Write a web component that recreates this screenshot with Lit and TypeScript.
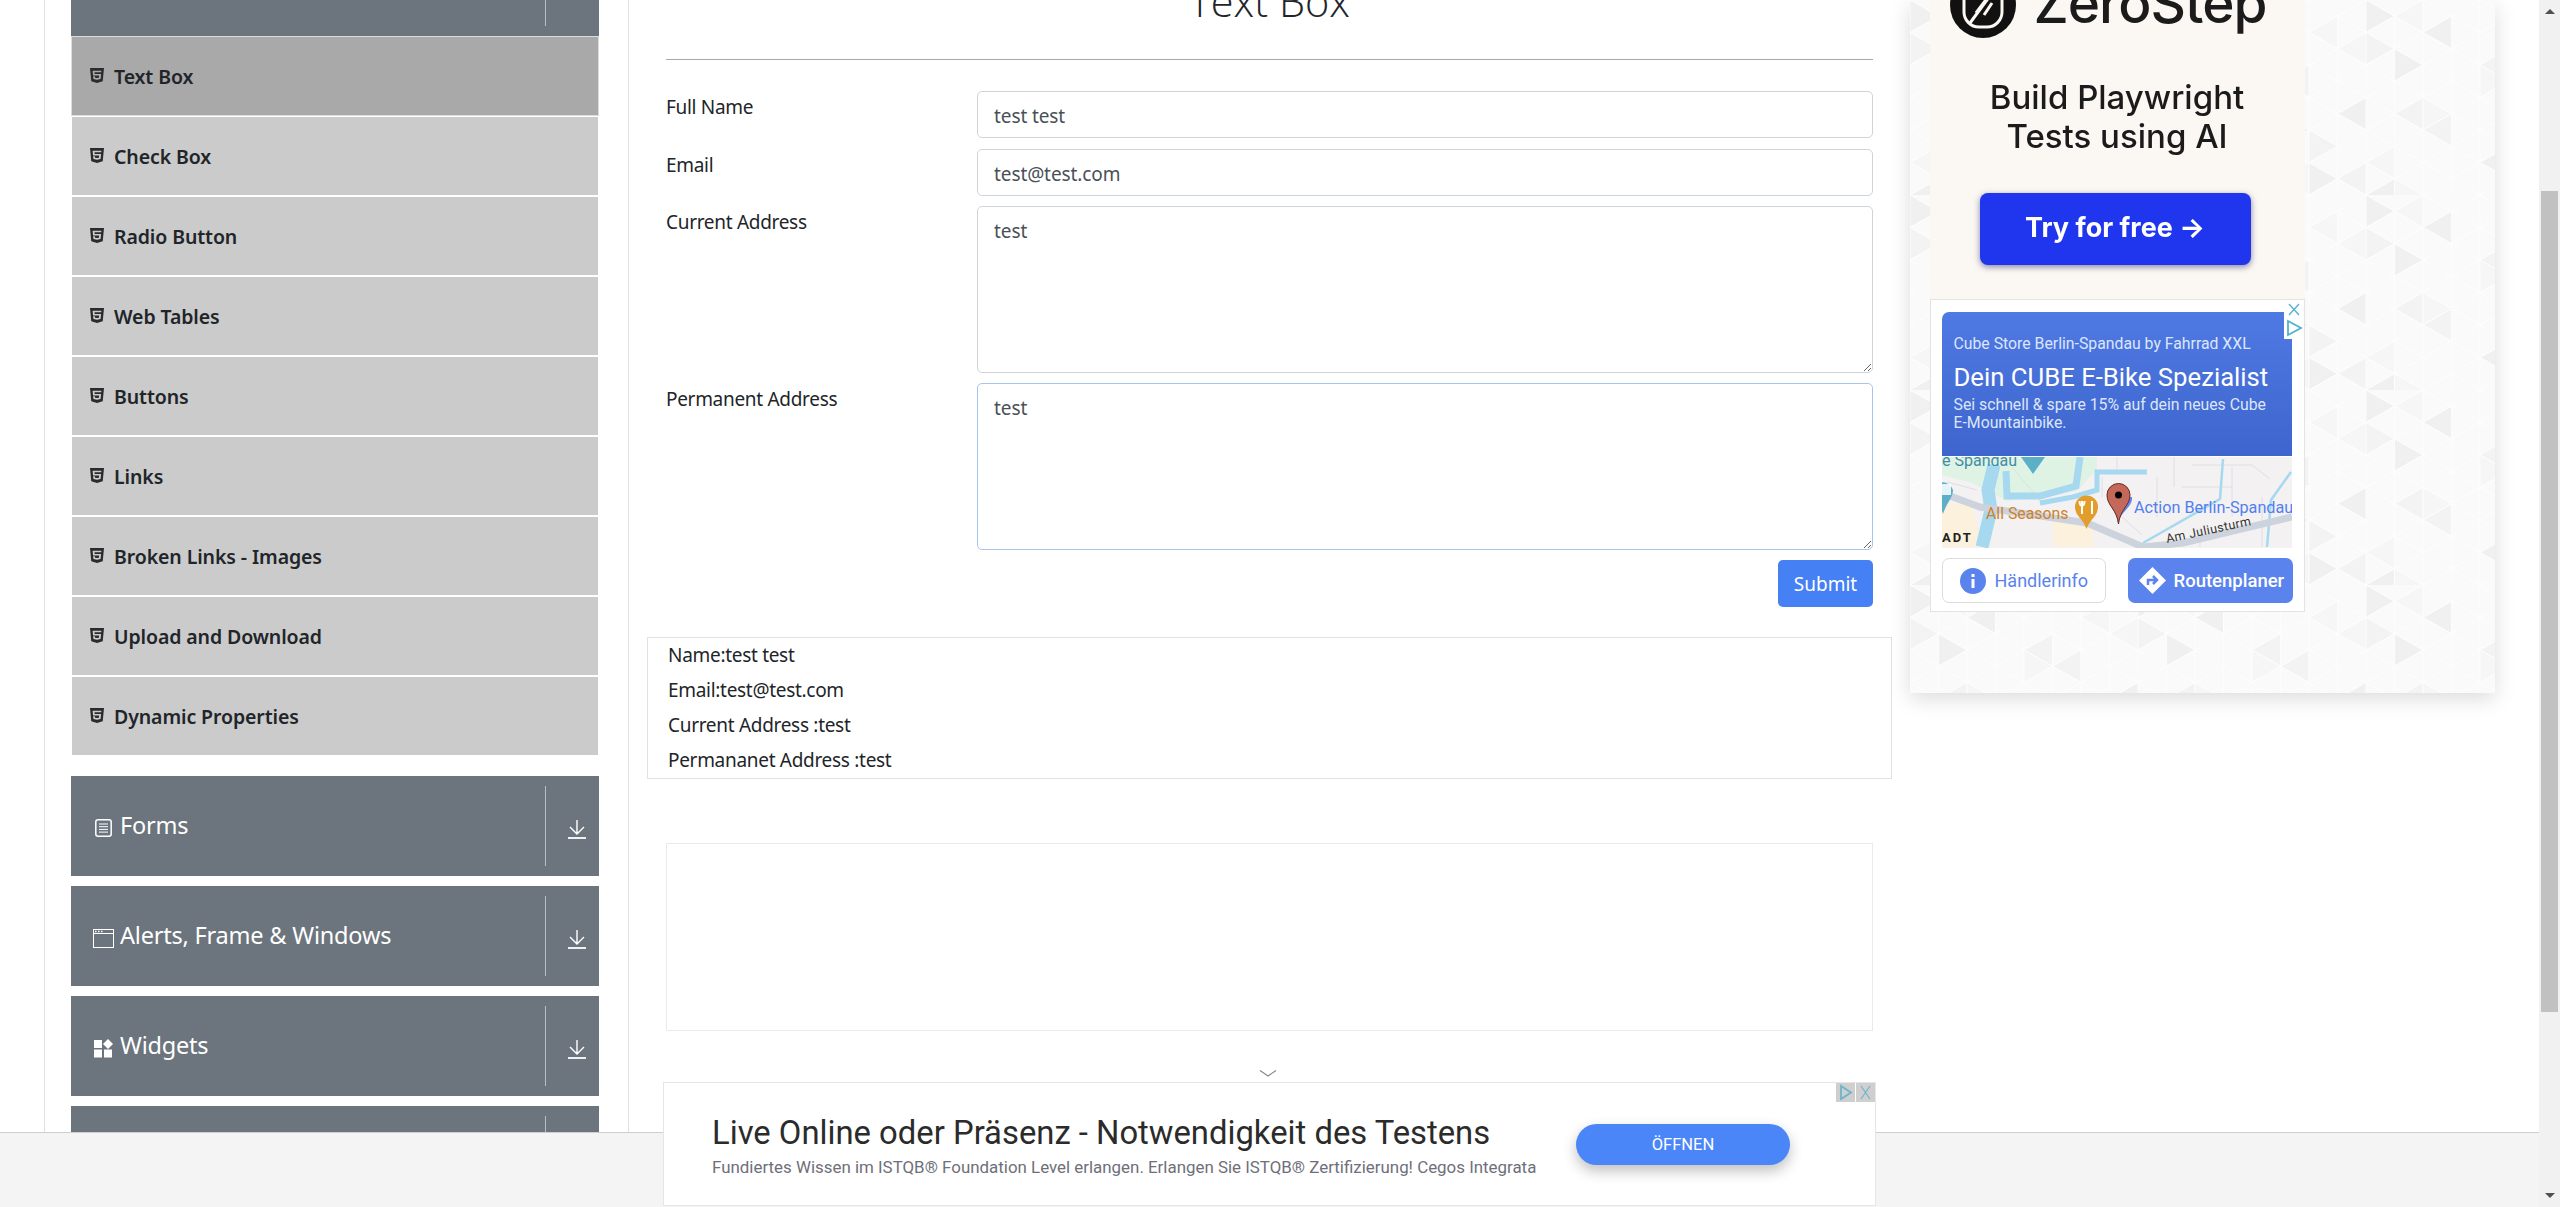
import { LitElement, css, html, svg, unsafeCSS } from "lit";
import { customElement } from "lit/decorators.js";

const FONT = unsafeCSS(`"Noto Sans", "Open Sans", sans-serif`);

// triangle grid behind the right hand card
function patternTile() {
  const w = 28.5;
  const h = 32.5;
  const cols = 8;
  const rows = 6;
  let polys = "";
  for (let c = 0; c < cols; c++) {
    for (let r = 0; r < rows * 2; r++) {
      const x = c * w;
      const y = (r * h) / 2;
      const even = (c + r) % 2 === 0;
      const pts = even
        ? `${x},${y} ${x},${y + h} ${x + w},${y + h / 2}`
        : `${x + w},${y} ${x + w},${y + h} ${x},${y + h / 2}`;
      const n = (c * 7 + r * 13 + c * r * 3) % 11;
      const fill = n === 0 ? "#f0f0f0" : n === 4 ? "#f3f3f3" : n === 7 ? "#f6f6f6" : "#fafafa";
      polys += `<polygon points='${pts}' fill='${fill}' stroke='#fdfdfd' stroke-width='1'/>`;
    }
  }
  const tile = `<svg xmlns='http://www.w3.org/2000/svg' width='${cols * w}' height='${rows * h}'>${polys}</svg>`;
  return `url("data:image/svg+xml,${encodeURIComponent(tile)}")`;
}

const html5Icon = svg`<svg class="shield" viewBox="0 0 384 512" preserveAspectRatio="none"><path d="M0 32l34.9 395.8L191.5 480l157.6-52.2L384 32H0zm308.2 127.9H124.4l4.1 49.4h175.6l-13.6 148.4-97.9 27v.3h-1.1l-98.7-27.3-6-75.8h47.7L138 320l53.5 14.5 53.7-14.5 6-62.2H84.3L71.5 112.2h241.1l-4.4 47.7z"/></svg>`;

const downIcon = svg`<svg class="down" viewBox="0 0 18 19" fill="none" stroke="#fff" stroke-width="1.4"><path d="M9 0v14M2 7l7 7 7-7"/><path stroke-width="1.8" d="M0 18h18"/></svg>`;

const formsIcon = svg`<svg class="cat" width="17" height="18" viewBox="0 0 17 18" fill="none" stroke="#fff"><rect x=".8" y=".8" width="15.4" height="16.4" rx="2.2" stroke-width="1.5"/><path d="M4 5h9M4 7.7h9M4 10.4h9M4 13.1h9" stroke-width="1"/></svg>`;

const windowIcon = svg`<svg class="cat" width="21" height="19" viewBox="0 0 21 19" fill="none" stroke="#fff"><rect x=".5" y=".5" width="20" height="18" stroke-width="1"/><path d="M.5 4.5h20" stroke-width="1"/><path d="M2 2.5h1.5M5 2.5h1.5M8 2.5h1.5" stroke-width="1.4"/></svg>`;

const widgetsIcon = svg`<svg class="cat" width="19" height="19" viewBox="0 0 19 19" fill="#fff"><rect y="1" width="8" height="8"/><rect y="10.5" width="8" height="8"/><rect x="10" y="10.5" width="8" height="8"/><path d="M14 0l5 5-5 5-5-5z"/></svg>`;

const mapArt = svg`<svg class="map" width="350" height="91" viewBox="0 0 350 91" font-family="Roboto, sans-serif">
  <rect width="350" height="91" fill="#f3f1f2"/>
  <path d="M0 0h155v12l-20 22-70 10-35-18L0 18z" fill="#dff3e5"/>
  <path d="M0 47h30l10 43H0zM111 63h40v27h-40z" fill="#fbf1dc"/>
  <g fill="none" stroke="#dedfe6" stroke-width="1">
    <path d="M175 0v12M215 20v40M232 0v30M250 8h60l18 14M240 30h50M290 10v50M320 40v50M180 60l20 18M258 70v20M160 20v20M70 10l30 36M5 25l30 8"/>
  </g>
  <g fill="none" stroke="#a6d8ef">
    <path d="M52 8l-6 25 3 20-9 37" stroke-width="13"/>
    <path d="M64 14l1 25h33l36-10 4-29" stroke-width="7"/>
    <path d="M98 46l33-6 24-7V15h50" stroke-width="5"/>
    <path d="M281 2l-3 40-77 44" stroke-width="2.5"/>
    <path d="M349 15l-20 28-4 47" stroke-width="2.5"/>
  </g>
  <path d="M0 36l38 14 107 16 56 24 40-4 109-26" fill="none" stroke="#ccd3dc" stroke-width="7"/>
  <path d="M79 0h24l-12 17z" fill="#5bb0c8"/>
  <path d="M-10 33a11 11 0 0 1 21 0c0 8-6 12-10 24-3-12-11-16-11-24z" fill="#5bb0c8"/>
  <rect x="-1" y="27" width="10" height="11" fill="#fff" opacity=".85"/>
  <path d="M133 50a11.500 11.500 0 0 1 23 0c0 9-8 12-11.500 22-3-10-11.500-13-11.500-22z" fill="#e29d2b"/>
  <path d="M140 44v13M150 44v13M137.500 44c0 6 5 6 5 0" stroke="#fff" stroke-width="2" fill="none"/>
  <path d="M166 42c2 8 8 12 10 24 3-12 15-16 14-26z" fill="#5f88ee"/>
  <path d="M165 38a11.500 11.500 0 0 1 23 0c0 11-10 14-11.500 29-1.500-15-11.500-18-11.500-29z" fill="#c4695a" stroke="#6d2a22" stroke-width="1"/>
  <circle cx="176.500" cy="38" r="3.500" fill="#000"/>
  <text x="0" y="9" font-size="16" fill="#3f8ea5">e Spandau</text>
  <text x="44" y="62" font-size="15.800" fill="#d0812a">All Seasons</text>
  <text x="192" y="56" font-size="16.200" fill="#5080ef">Action Berlin-Spandau</text>
  <text x="0" y="85" font-size="13" font-weight="700" letter-spacing="2" fill="#222">ADT</text>
  <text transform="translate(225 86) rotate(-12)" font-size="12.500" letter-spacing=".4" fill="#333">Am Juliusturm</text>
</svg>`;

@customElement("app-root")
export class AppRoot extends LitElement {
  static styles = css`
    :host {
      display: block;
      width: 2560px;
      height: 1207px;
      overflow: hidden;
      font-family: ${FONT};
      font-size: 19px;
      letter-spacing: -0.3px;
      color: #212529;
      background: #fff;
    }
    * {
      box-sizing: border-box;
    }
    .page {
      display: flex;
      height: 1207px;
    }
    .viewport {
      position: relative;
      flex: 1;
      overflow: hidden;
      display: flex;
      padding-left: 44px;
    }

    /* sidebar */
    .side {
      width: 585px;
      height: 1207px;
      flex: none;
      border-left: 1px solid #dee2e6;
      border-right: 1px solid #dee2e6;
      padding: 0 29px 0 26px;
    }
    .group {
      display: flex;
      align-items: center;
      height: 100px;
      margin-bottom: 10px;
      padding-left: 21px;
      background: #6c757d;
      color: #fff;
      font-size: 23.500px;
      letter-spacing: -0.2px;
    }
    .group.scrolled {
      margin-top: -64px;
      margin-bottom: 0;
    }
    .group.tail {
      margin-bottom: 0;
    }
    .slot {
      width: 22px;
      margin-right: 6px;
      display: flex;
      justify-content: center;
      padding-top: 4px;
    }
    .group .name {
      flex: 1;
      line-height: 1;
    }
    .toggle {
      align-self: stretch;
      width: 54px;
      margin: 10px 0;
      border-left: 1px solid #b9bec3;
      display: flex;
      padding: 34px 0 0 22px;
    }
    .down {
      width: 18px;
      height: 19px;
    }
    .list {
      margin-bottom: 20px;
    }
    .item {
      display: flex;
      align-items: center;
      height: 80px;
      padding-left: 18px;
      background: #cbcbcb;
      border: 1px solid #fff;
      font-size: 19.500px;
      font-weight: 600;
      letter-spacing: -0.1px;
    }
    .item.active {
      background: #a9a9a9;
      border-color: #dcdcdc;
    }
    .shield {
      width: 14px;
      height: 17px;
      fill: #2b2b2f;
      margin: -1px 10px 0 0;
    }

    /* main column */
    .main {
      width: 1281px;
      flex: none;
      padding: 0 37px;
    }
    h1 {
      margin: -21px 0 36px;
      height: 44px;
      font-size: 41.500px;
      line-height: 44px;
      font-weight: 300;
      font-family: "Open Sans", sans-serif;
      letter-spacing: 0;
      text-align: center;
      color: #212529;
    }
    hr {
      margin: 0 0 31px;
      border: 0;
      height: 1px;
      background: #a8a8a8;
    }
    .field {
      display: grid;
      grid-template-columns: 311px 896px;
      margin-bottom: 10px;
    }
    .field.first {
      margin-bottom: 11px;
    }
    label {
      line-height: 30px;
      padding-top: 1px;
    }
    input,
    textarea {
      display: block;
      width: 100%;
      font: inherit;
      letter-spacing: -0.1px;
      color: #495057;
      border: 1px solid #ced4da;
      border-radius: 5px;
      padding: 0 16px;
      background: #fff;
      outline: none;
    }
    input {
      height: 47px;
      padding-top: 2px;
    }
    textarea {
      height: 167px;
      padding-top: 9px;
      line-height: 30px;
    }
    textarea.focus {
      border-color: #a9c4ea;
    }
    .actions {
      display: flex;
      justify-content: flex-end;
      margin-bottom: 30px;
    }
    .submit {
      width: 95px;
      height: 47px;
      font: inherit;
      letter-spacing: 0;
      padding-top: 2px;
      color: #fff;
      background: #4580f5;
      border: 0;
      border-radius: 5px;
    }
    .output {
      margin: 0 -19px 64px;
      height: 142px;
      padding: 0 20px;
      border: 1px solid #dee2e6;
      line-height: 35px;
    }
    .slot-ad {
      height: 188px;
      border: 1px solid #eaeaea;
      margin-bottom: 39px;
    }
    .chevron {
      display: block;
      margin-left: 593px;
    }

    /* right card */
    .card {
      width: 585px;
      height: 693px;
      flex: none;
      padding-left: 19.500px;
      letter-spacing: 0;
      background-color: #fafafa;
      background-image: ${unsafeCSS(patternTile())};
      box-shadow: 0 6px 20px rgba(0, 0, 0, 0.14);
    }
    .zero {
      width: 375px;
      height: 299px;
      overflow: hidden;
      background: #fbf8f3;
      color: #1b1b1b;
      font-family: Inter, sans-serif;
      text-align: center;
      filter: blur(0.3px);
    }
    .brand {
      display: flex;
      align-items: flex-start;
      margin: -45px 0 0 20px;
      height: 83px;
    }
    .brand span {
      margin-left: 18px;
      padding-top: 7px;
      font-size: 55px;
      font-weight: 500;
      line-height: 83px;
      letter-spacing: -1px;
    }
    .zero p {
      margin: 0;
      font-size: 33px;
      font-weight: 500;
      line-height: 39px;
      padding-top: 40px;
    }
    .zero p + p {
      padding-top: 0;
    }
    .try {
      width: 271px;
      height: 72px;
      margin: 37px 0 0 50px;
      border-radius: 8px;
      background: #1f35ee;
      box-shadow: 0 2px 6px rgba(20, 20, 90, 0.5);
      color: #fff;
      font-size: 27px;
      font-weight: 700;
      line-height: 70px;
    }
    .cube {
      position: relative;
      width: 375px;
      height: 313px;
      padding: 12px 11px 0;
      background: #fff;
      border: 1px solid #e3e3e3;
    }
    .panel {
      width: 350px;
      height: 144px;
      padding: 22px 12px 0;
      border-radius: 7px 7px 0 0;
      background: linear-gradient(#4f79e3, #3e65cd);
      color: #dce6fb;
      font-family: Roboto, sans-serif;
      font-size: 15.800px;
    }
    .panel .shop {
      line-height: 20px;
    }
    .panel .head {
      margin-top: 7px;
      color: #fff;
      font-size: 25.700px;
      line-height: 32px;
    }
    .panel .desc {
      margin-top: 3px;
      line-height: 18px;
    }
    .map {
      display: block;
      margin-top: 1px;
    }
    .cta {
      display: flex;
      justify-content: space-between;
      margin-top: 10px;
      font-family: Roboto, sans-serif;
      font-size: 18px;
    }
    .cta div {
      display: flex;
      align-items: center;
      height: 45px;
      border-radius: 7px;
    }
    .info {
      width: 164px;
      border: 1px solid #dcdcdc;
      color: #5a82ee;
      padding-left: 17px;
      gap: 9px;
    }
    .route {
      width: 165px;
      background: #5b83ee;
      color: #fff;
      padding-left: 11px;
      gap: 8px;
      font-size: 18.500px;
      font-weight: 500;
    }
    .choice {
      position: absolute;
      top: 0;
      right: 0;
      width: 20px;
      height: 39px;
      background: #fff;
    }

    /* bottom banner and footer */
    .footer {
      position: absolute;
      left: 0;
      right: 0;
      top: 1132px;
      bottom: 0;
      background: #f4f4f4;
      border-top: 1px solid #cfcfcf;
    }
    .banner {
      position: absolute;
      left: 663px;
      top: 1082px;
      width: 1213px;
      height: 124px;
      display: flex;
      padding-left: 48px;
      letter-spacing: 0;
      background: #fff;
      border: 1px solid #e6e6e6;
    }
    .copy {
      width: 864px;
      padding-top: 30px;
    }
    .copy .big {
      color: #2b2b2b;
      font-family: Roboto, sans-serif;
      font-size: 32.800px;
      line-height: 40px;
    }
    .copy .small {
      margin-top: 4px;
      color: #6f6f7a;
      font-family: Roboto, sans-serif;
      font-size: 16.900px;
      line-height: 20px;
    }
    .open {
      width: 214px;
      height: 41px;
      margin-top: 41px;
      border-radius: 21px;
      background: #4a86f8;
      box-shadow: 0 6px 14px rgba(0, 0, 0, 0.25);
      color: #fff;
      font-family: Roboto, sans-serif;
      font-size: 16.500px;
      line-height: 41px;
      text-align: center;
    }
    .marks {
      position: absolute;
      top: 0;
      right: 0;
      display: flex;
      gap: 1px;
    }
    .marks svg {
      display: block;
      background: #cfcfcf;
    }

    /* scrollbar */
    .bar {
      width: 21px;
      flex: none;
      display: flex;
      flex-direction: column;
      align-items: center;
      padding: 9px 0 9px;
      background: #f1f1f1;
    }
    .arrow {
      width: 0;
      height: 0;
      border-left: 5px solid transparent;
      border-right: 5px solid transparent;
    }
    .arrow.up {
      border-bottom: 5px solid #505050;
    }
    .arrow.dn {
      border-top: 5px solid #505050;
      margin-top: auto;
    }
    .thumb {
      width: 17px;
      height: 821px;
      margin-top: 177px;
      background: #c1c1c1;
    }
  `;

  render() {
    const items = ["Text Box", "Check Box", "Radio Button", "Web Tables", "Buttons", "Links", "Broken Links - Images", "Upload and Download", "Dynamic Properties"];
    const groups = [
      { name: "Forms", icon: formsIcon },
      { name: "Alerts, Frame & Windows", icon: windowIcon },
      { name: "Widgets", icon: widgetsIcon },
    ];
    return html`
      <div class="page">
        <div class="viewport">
          <aside class="side">
            <div class="group scrolled">
              <span class="name"></span>
              <div class="toggle"></div>
            </div>
            <div class="list">
              ${items.map(
                (t, i) => html`<div class="item ${i === 0 ? "active" : ""}">${html5Icon}<span>${t}</span></div>`
              )}
            </div>
            ${groups.map(
              (g) => html`
                <div class="group">
                  <span class="slot">${g.icon}</span>
                  <span class="name">${g.name}</span>
                  <div class="toggle">${downIcon}</div>
                </div>
              `
            )}
            <div class="group tail">
              <span class="name"></span>
              <div class="toggle"></div>
            </div>
          </aside>

          <main class="main">
            <h1>Text Box</h1>
            <hr />
            <div class="field first"><label>Full Name</label><input value="test test" /></div>
            <div class="field"><label>Email</label><input value="test@test.com" /></div>
            <div class="field"><label>Current Address</label><textarea>test</textarea></div>
            <div class="field"><label>Permanent Address</label><textarea class="focus">test</textarea></div>
            <div class="actions"><button class="submit">Submit</button></div>
            <div class="output">
              <div>Name:test test</div>
              <div>Email:test@test.com</div>
              <div>Current Address :test</div>
              <div>Permananet Address :test</div>
            </div>
            <div class="slot-ad"></div>
            <svg class="chevron" width="18" height="7" viewBox="0 0 18 7" fill="none" stroke="#8a8a8a" stroke-width="1.200"><path d="M1 .5l8 5.500 8-5.500" /></svg>
          </main>

          <aside class="card">
            <div class="zero">
              <div class="brand">
                <svg width="66" height="83" viewBox="0 0 66 83">
                  <circle cx="33" cy="50" r="33" fill="#111" />
                  <rect x="14" y="26" width="38" height="46" rx="15" fill="none" stroke="#fbf8f3" stroke-width="3" />
                  <path d="M20 68L48 30M26 58l12-16M34 60l8-12" stroke="#fbf8f3" stroke-width="3" fill="none" />
                </svg>
                <span>ZeroStep</span>
              </div>
              <p>Build Playwright</p>
              <p>Tests using AI</p>
              <div class="try">Try for free →</div>
            </div>
            <div class="cube">
              <div class="panel">
                <div class="shop">Cube Store Berlin-Spandau by Fahrrad XXL</div>
                <div class="head">Dein CUBE E-Bike Spezialist</div>
                <div class="desc">Sei schnell &amp; spare 15% auf dein neues Cube<br />E-Mountainbike.</div>
              </div>
              ${mapArt}
              <div class="cta">
                <div class="info">
                  <svg width="26" height="26" viewBox="0 0 26 26"><circle cx="13" cy="13" r="13" fill="#5b83ee" /><path d="M11.500 6h3v3h-3zM11.500 11h3v9h-3z" fill="#fff" /></svg>
                  <span>Händlerinfo</span>
                </div>
                <div class="route">
                  <svg width="27" height="27" viewBox="0 0 27 27"><path d="M13.500 0L27 13.500 13.500 27 0 13.500z" fill="#fff" /><path d="M9 18v-5h8M14 9l4 4-4 4" fill="none" stroke="#5b83ee" stroke-width="2.500" /></svg>
                  <span>Routenplaner</span>
                </div>
              </div>
              <div class="choice">
                <svg width="20" height="39" viewBox="0 0 20 39" fill="none" stroke="#55b1cb" stroke-width="1.300">
                  <path d="M5 4l10 11M15 4L5 15" />
                  <path d="M4 21v14l13-7z" stroke-width="1.800" />
                </svg>
              </div>
            </div>
          </aside>

          <div class="footer"></div>
          <div class="banner">
            <div class="copy">
              <div class="big">Live Online oder Präsenz - Notwendigkeit des Testens</div>
              <div class="small">Fundiertes Wissen im ISTQB® Foundation Level erlangen. Erlangen Sie ISTQB® Zertifizierung! Cegos Integrata</div>
            </div>
            <div class="open">ÖFFNEN</div>
            <div class="marks">
              <svg width="19" height="19" viewBox="0 0 19 19" fill="none" stroke="#6fb4cc" stroke-width="1.800"><path d="M5 3v13l10-6.500z" /></svg>
              <svg width="19" height="19" viewBox="0 0 19 19" fill="none" stroke="#6fb4cc" stroke-width="1.200"><path d="M5 3l9 13M14 3L5 16" /></svg>
            </div>
          </div>
        </div>
        <div class="bar">
          <div class="arrow up"></div>
          <div class="thumb"></div>
          <div class="arrow dn"></div>
        </div>
      </div>
    `;
  }
}
